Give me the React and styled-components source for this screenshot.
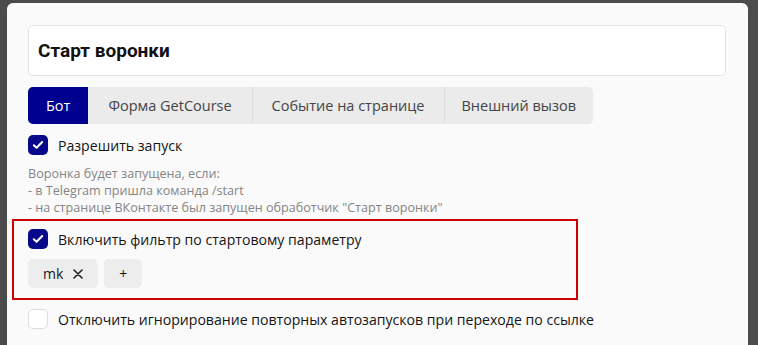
import React from "react";
import styled, { createGlobalStyle } from "styled-components";

const Global = createGlobalStyle`
  html, body { margin: 0; padding: 0; background: #4b4b4b; height: 100%; overflow: hidden; }
  body { font-family: "Open Sans", "Noto Sans", sans-serif; }
`;

const Backdrop = styled.div`
  padding: 3px 10px 0 7px;
  height: 345px;
  box-sizing: border-box;
  overflow: hidden;
`;

const Modal = styled.div`
  background: #fafafa;
  border-radius: 6px 6px 0 0;
  padding: 22px 22px 0 21px;
  height: 400px;
  box-sizing: border-box;
  display: flex;
  flex-direction: column;
`;

const TitleInput = styled.div`
  height: 51px;
  box-sizing: border-box;
  border: 1px solid #e4e4e4;
  border-radius: 5px;
  background: #fff;
  display: flex;
  align-items: center;
  padding: 0 9px;
  font-family: Roboto, "Open Sans", sans-serif;
  font-size: 19px;
  font-weight: 700;
  color: #111;
`;

const Tabs = styled.div`
  display: flex;
  margin-top: 11px;
  align-self: flex-start;
  height: 37px;
  border-radius: 5px;
  overflow: hidden;
  background: #ebebeb;
`;

const Tab = styled.div`
  display: flex;
  align-items: center;
  padding: 0 ${(p) => p.$pad}px;
  font-size: 14.5px;
  color: ${(p) => (p.$active ? "#fff" : "#444")};
  background: ${(p) => (p.$active ? "#000090" : "#ebebeb")};
  border-left: ${(p) => (p.$sep ? "1px solid #dcdcdc" : "none")};
`;

const CheckRow = styled.label`
  display: flex;
  align-items: center;
  gap: 10px;
  margin-top: ${(p) => p.$mt}px;
  font-size: 14.1px;
  color: #151515;
  height: 20px;
`;

const Box = styled.span`
  width: 20px;
  height: 20px;
  box-sizing: border-box;
  border-radius: 5px;
  display: flex;
  align-items: center;
  justify-content: center;
  background: ${(p) => (p.$checked ? "#08088a" : "#fff")};
  border: ${(p) => (p.$checked ? "none" : "1px solid #dcdcdc")};
  flex: none;
`;

const Hint = styled.div`
  margin-top: ${(p) => p.$mt}px;
  font-size: 12.6px;
  line-height: 17px;
  color: #858585;
  white-space: pre-line;
`;

const Highlight = styled.div`
  margin: 3px 0 0 -16px;
  width: 566px;
  box-sizing: border-box;
  border: 2px solid #cc0000;
  padding: 8px 14px 10px;
  display: flex;
  flex-direction: column;
`;

const Chips = styled.div`
  display: flex;
  gap: 6px;
  margin-top: 10px;
`;

const Chip = styled.div`
  height: 29px;
  box-sizing: border-box;
  padding: 0 ${(p) => p.$pad}px;
  border-radius: 5px;
  background: #ededed;
  display: flex;
  align-items: center;
  gap: 10px;
  font-size: 14px;
  color: #151515;
`;

const Check = () => (
  <svg width="12" height="10" viewBox="0 0 12 10" fill="none">
    <path d="M1.8 5.2 L4.6 7.8 L10.2 2" stroke="#fff" strokeWidth="2" strokeLinecap="round" strokeLinejoin="round" />
  </svg>
);

const Cross = () => (
  <svg width="10" height="10" viewBox="0 0 10 10">
    <path d="M1 1 L9 9 M9 1 L1 9" stroke="#222" strokeWidth="1.6" strokeLinecap="round" />
  </svg>
);

export default function App() {
  return (
    <>
      <Global />
      <Backdrop>
        <Modal>
          <TitleInput>Старт воронки</TitleInput>
          <Tabs>
            <Tab $active $pad={18}>Бот</Tab>
            <Tab $pad={20}>Форма GetCourse</Tab>
            <Tab $sep $pad={19}>Событие на странице</Tab>
            <Tab $sep $pad={17}>Внешний вызов</Tab>
          </Tabs>
          <CheckRow $mt={11}>
            <Box $checked><Check /></Box>
            Разрешить запуск
          </CheckRow>
          <Hint $mt={10}>
            {"Воронка будет запущена, если:\n- в Telegram пришла команда /start\n- на странице ВКонтакте был запущен обработчик \"Старт воронки\""}
          </Hint>
          <Highlight>
            <CheckRow $mt={0}>
              <Box $checked><Check /></Box>
              Включить фильтр по стартовому параметру
            </CheckRow>
            <Chips>
              <Chip $pad={15}>mk <Cross /></Chip>
              <Chip $pad={15}>+</Chip>
            </Chips>
          </Highlight>
          <CheckRow $mt={9}>
            <Box />
            Отключить игнорирование повторных автозапусков при переходе по ссылке
          </CheckRow>
          <Hint $mt={14}>Воронка будет запускаться повторно</Hint>
        </Modal>
      </Backdrop>
    </>
  );
}
